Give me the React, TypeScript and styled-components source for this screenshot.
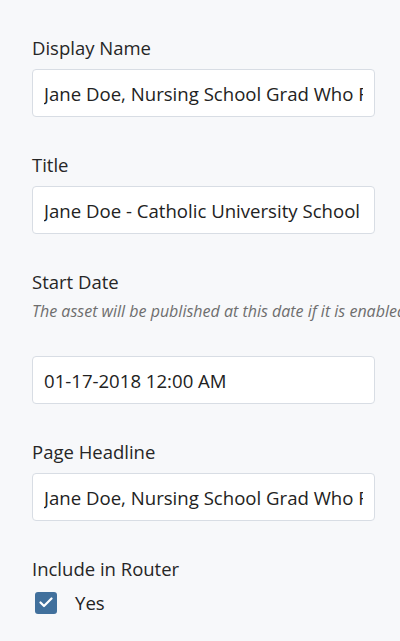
import React from "react";
import styled, { createGlobalStyle } from "styled-components";

const Global = createGlobalStyle`
  html, body { margin: 0; padding: 0; background: #f7f8fa; }
  body { font-family: "Open Sans", "Noto Sans", sans-serif; color: #222; overflow: hidden; }
`;

const Page = styled.div`
  width: 400px;
  height: 641px;
  box-sizing: border-box;
  padding: 36px 0 0 32px;
  overflow: hidden;
  background: #f7f8fa;
`;

const Field = styled.div<{ $gap?: number }>`
  display: flex;
  flex-direction: column;
  margin-bottom: ${(p) => p.$gap ?? 36}px;
`;

const Label = styled.div`
  font-size: 18.5px;
  line-height: 24px;
  color: #262626;
  margin-bottom: 9px;
`;

const Help = styled.div`
  font-size: 16px;
  font-style: italic;
  line-height: 20px;
  color: #6e6e6e;
  white-space: nowrap;
  margin-top: -2px;
  margin-bottom: 35px;
`;

const Input = styled.div`
  width: 343px;
  height: 48px;
  box-sizing: border-box;
  border: 1px solid #d8dde4;
  border-radius: 4px;
  background: #fff;
  padding: 0 11px 0 11px;
  display: flex;
  align-items: center;
  font-size: 18.6px;
  color: #222;
  white-space: nowrap;
  overflow: hidden;
`;

const Clip = styled.span`
  display: block;
  overflow: hidden;
  flex: 1 1 auto;
  min-width: 0;
`;

const CheckRow = styled.label`
  display: flex;
  align-items: center;
  gap: 18px;
  padding-left: 3px;
  font-size: 18.6px;
  color: #222;
`;

const Box = styled.span`
  width: 22px;
  height: 22px;
  border-radius: 3px;
  background: #41709c;
  display: flex;
  align-items: center;
  justify-content: center;
`;

export default function App() {
  return (
    <>
      <Global />
      <Page>
        <Field>
          <Label>Display Name</Label>
          <Input>
            <Clip>Jane Doe, Nursing School Grad Who Found Her Calling</Clip>
          </Input>
        </Field>
        <Field>
          <Label>Title</Label>
          <Input>
            <Clip>Jane Doe - Catholic University School of Nursing</Clip>
          </Input>
        </Field>
        <Field>
          <Label>Start Date</Label>
          <Help>The asset will be published at this date if it is enabled.</Help>
          <Input>
            <Clip>01-17-2018 12:00 AM</Clip>
          </Input>
        </Field>
        <Field>
          <Label>Page Headline</Label>
          <Input>
            <Clip>Jane Doe, Nursing School Grad Who Found Her Calling</Clip>
          </Input>
        </Field>
        <Field $gap={0}>
          <Label>Include in Router</Label>
          <CheckRow>
            <Box>
              <svg width="14" height="11" viewBox="0 0 14 11" fill="none">
                <path d="M1.5 5.5 L5 9 L12.5 1.5" stroke="#fff" strokeWidth="2.2" strokeLinecap="round" strokeLinejoin="round" />
              </svg>
            </Box>
            Yes
          </CheckRow>
        </Field>
      </Page>
    </>
  );
}
